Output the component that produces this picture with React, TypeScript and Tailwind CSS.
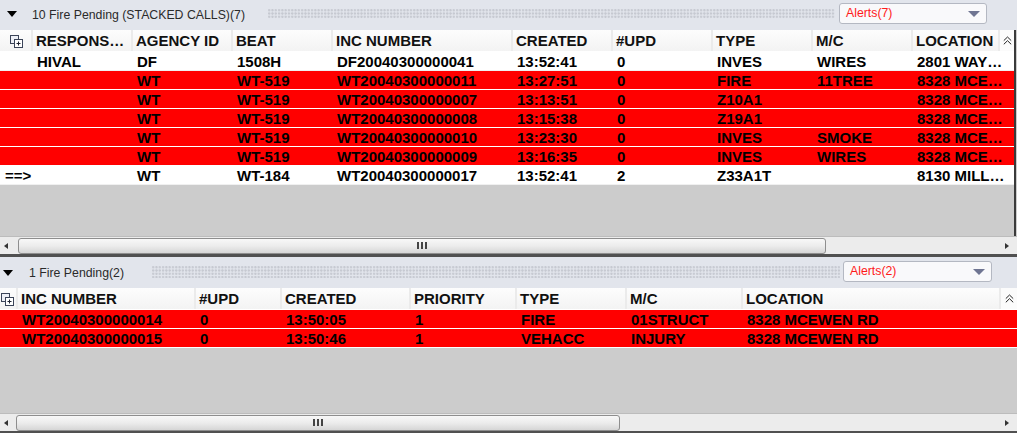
import React from "react";

type Row = { red: boolean; cells: string[] };

const topHeaderW = [33, 100, 100, 100, 180, 100, 100, 100, 100, 87];
const topDataW = [33, 100, 100, 100, 180, 100, 100, 100, 100, 100];
const topLabels = ["", "RESPONS…", "AGENCY ID", "BEAT", "INC NUMBER", "CREATED", "#UPD", "TYPE", "M/C", "LOCATION"];
const topRows: Row[] = [
  { red: false, cells: ["", "HIVAL", "DF", "1508H", "DF20040300000041", "13:52:41", "0", "INVES", "WIRES", "2801 WAY…"] },
  { red: true, cells: ["", "", "WT", "WT-519", "WT20040300000011", "13:27:51", "0", "FIRE", "11TREE", "8328 MCE…"] },
  { red: true, cells: ["", "", "WT", "WT-519", "WT20040300000007", "13:13:51", "0", "Z10A1", "", "8328 MCE…"] },
  { red: true, cells: ["", "", "WT", "WT-519", "WT20040300000008", "13:15:38", "0", "Z19A1", "", "8328 MCE…"] },
  { red: true, cells: ["", "", "WT", "WT-519", "WT20040300000010", "13:23:30", "0", "INVES", "SMOKE", "8328 MCE…"] },
  { red: true, cells: ["", "", "WT", "WT-519", "WT20040300000009", "13:16:35", "0", "INVES", "WIRES", "8328 MCE…"] },
  { red: false, cells: ["==>", "", "WT", "WT-184", "WT20040300000017", "13:52:41", "2", "Z33A1T", "", "8130 MILL…"] },
];

const botHeaderW = [18, 178, 86, 129, 106, 110, 116, 258];
const botDataW = [18, 178, 86, 129, 106, 110, 116, 274];
const botLabels = ["", "INC NUMBER", "#UPD", "CREATED", "PRIORITY", "TYPE", "M/C", "LOCATION"];
const botRows: Row[] = [
  { red: true, cells: ["", "WT20040300000014", "0", "13:50:05", "1", "FIRE", "01STRUCT", "8328 MCEWEN RD"] },
  { red: true, cells: ["", "WT20040300000015", "0", "13:50:46", "1", "VEHACC", "INJURY", "8328 MCEWEN RD"] },
];

function ExpandIcon() {
  return (
    <svg width="13" height="13" viewBox="0 0 13 13" className="block">
      <rect x="0.5" y="0.5" width="8" height="8" fill="#eef0f6" stroke="#3b4458" strokeWidth="1" />
      <rect x="4.5" y="4.5" width="8" height="8" fill="#ffffff" stroke="#3b4458" strokeWidth="1" />
      <path d="M8.5 6.5v4M6.5 8.5h4" stroke="#1f2433" strokeWidth="1" />
    </svg>
  );
}

function DoubleChevron() {
  return (
    <svg width="9" height="9" viewBox="0 0 9 9" className="block">
      <polyline points="0.8,4.6 4.5,1 8.2,4.6" fill="none" stroke="#222" strokeWidth="1" />
      <polyline points="0.8,8.3 4.5,4.7 8.2,8.3" fill="none" stroke="#222" strokeWidth="1" />
    </svg>
  );
}

function AlertsBox({ label, w }: { label: string; w: string }) {
  return (
    <div className={`${w} h-[21px] bg-[#f9f9fb] border border-[#b4b8c2] rounded-[3px] flex items-center justify-between pl-[6px] pr-[6px]`}>
      <span className="text-[12.3px] text-[#ff1a1a] leading-none">{label}</span>
      <span className="w-0 h-0 border-x-[6px] border-x-transparent border-t-[6px] border-t-[#6f7592]" />
    </div>
  );
}

const dots =
  "bg-[radial-gradient(circle_at_1.2px_1.2px,#c6c9d1_1px,transparent_1.3px)] bg-[length:3.3px_3.3px]";

function ScrollBar({ thumbStart, thumbW }: { thumbStart: number; thumbW: number }) {
  return (
    <div className="h-[18px] shrink-0 bg-[#ececec] border-t border-[#bcbcbc] flex items-center relative">
      <span className="ml-[4px] w-0 h-0 border-y-[3px] border-y-transparent border-r-[4px] border-r-[#333]" />
      <div
        className="h-[16px] rounded-[3px] border border-[#8e8e8e] bg-gradient-to-b from-[#f8f8f8] via-[#ececec] to-[#d6d6d6] flex items-center justify-center gap-[2px]"
        style={{ marginLeft: thumbStart - 8, width: thumbW }}
      >
        <span className="w-[2px] h-[7px] bg-[#444]" />
        <span className="w-[2px] h-[7px] bg-[#444]" />
        <span className="w-[2px] h-[7px] bg-[#444]" />
      </div>
      <div className="flex-1" />
      <span className="mr-[8px] w-0 h-0 border-y-[3px] border-y-transparent border-l-[4px] border-l-[#333]" />
    </div>
  );
}

function HeaderRow({ widths, labels, iconSmall }: { widths: number[]; labels: string[]; iconSmall?: boolean }) {
  return (
    <div className="h-[22px] shrink-0 flex bg-[#ededed] border-b border-white">
      {widths.map((w, i) => (
        <div
          key={i}
          className="h-full shrink-0 bg-gradient-to-b from-[#fdfdfd] to-[#f3f3f3] border-r-2 border-[#ebebeb] flex items-center overflow-hidden whitespace-nowrap"
          style={{ width: w }}
        >
          {i === 0 ? (
            <div className={iconSmall ? "ml-[1px] mt-[2px]" : "ml-[10px] mt-[2px]"}>
              <ExpandIcon />
            </div>
          ) : (
            <span className="pl-[3px] text-[15px] font-bold text-[#111] leading-none">{labels[i]}</span>
          )}
        </div>
      ))}
      <div className="flex-1 h-full bg-[#fbfbfb] flex items-center justify-center">
        <DoubleChevron />
      </div>
    </div>
  );
}

function DataRow({ widths, row }: { widths: number[]; row: Row }) {
  return (
    <div className={`h-[19px] shrink-0 flex border-b ${row.red ? "bg-[#ff0000] border-white" : "bg-white border-[#f0f0f0]"}`}>
      {widths.map((w, i) => (
        <div
          key={i}
          className={`h-full shrink-0 flex items-center overflow-hidden whitespace-nowrap ${i === 0 ? "pl-[5px]" : "pl-[4px]"}`}
          style={{ width: w }}
        >
          <span className="text-[15px] font-bold text-black leading-none">{row.cells[i]}</span>
        </div>
      ))}
    </div>
  );
}

export default function App() {
  return (
    <div className="w-[1017px] h-[433px] overflow-hidden bg-[#cccccc] flex flex-col font-['Liberation_Sans',Arial,sans-serif]">
      {/* Top panel header */}
      <div className="h-[30px] shrink-0 bg-[#e2e5ec] flex items-start">
        <div className="w-[268px] shrink-0 flex items-start">
          <span className="ml-[7px] mt-[11px] w-0 h-0 border-x-[5px] border-x-transparent border-t-[6px] border-t-black" />
          <span className="ml-[15px] mt-[8px] text-[12.3px] leading-[14px] text-[#2a2a2a] whitespace-nowrap">
            10 Fire Pending (STACKED CALLS)(7)
          </span>
        </div>
        <div className={`w-[567px] h-[10px] mt-[9px] shrink-0 ${dots}`} />
        <div className="ml-[4px] mt-[3px]">
          <AlertsBox label="Alerts(7)" w="w-[148px]" />
        </div>
      </div>

      {/* Top table */}
      <div className="h-[206px] shrink-0 flex flex-col mr-[1px] border-r-2 border-[#3a3a3a] overflow-hidden">
        <HeaderRow widths={topHeaderW} labels={topLabels} />
        {topRows.map((r, i) => (
          <DataRow key={i} widths={topDataW} row={r} />
        ))}
        <div className="flex-1 bg-[#cccccc]" />
      </div>

      <ScrollBar thumbStart={18} thumbW={808} />
      <div className="h-[3px] shrink-0 bg-[#505050]" />

      {/* Bottom panel header */}
      <div className="h-[31px] shrink-0 bg-[#e2e5ec] flex items-start">
        <div className="w-[152px] shrink-0 flex items-start">
          <span className="ml-[3px] mt-[13px] w-0 h-0 border-x-[5px] border-x-transparent border-t-[6px] border-t-black" />
          <span className="ml-[16px] mt-[9px] text-[12.3px] leading-[14px] text-[#2a2a2a] whitespace-nowrap">
            1 Fire Pending(2)
          </span>
        </div>
        <div className={`w-[688px] h-[12px] mt-[9px] shrink-0 ${dots}`} />
        <div className="ml-[3px] mt-[4px]">
          <AlertsBox label="Alerts(2)" w="w-[149px]" />
        </div>
      </div>

      {/* Bottom table */}
      <div className="h-[125px] shrink-0 flex flex-col overflow-hidden">
        <HeaderRow widths={botHeaderW} labels={botLabels} iconSmall />
        {botRows.map((r, i) => (
          <DataRow key={i} widths={botDataW} row={r} />
        ))}
        <div className="flex-1 bg-[#cccccc]" />
      </div>

      <ScrollBar thumbStart={16} thumbW={604} />
      <div className="h-[2px] shrink-0 bg-[#505050]" />
    </div>
  );
}
